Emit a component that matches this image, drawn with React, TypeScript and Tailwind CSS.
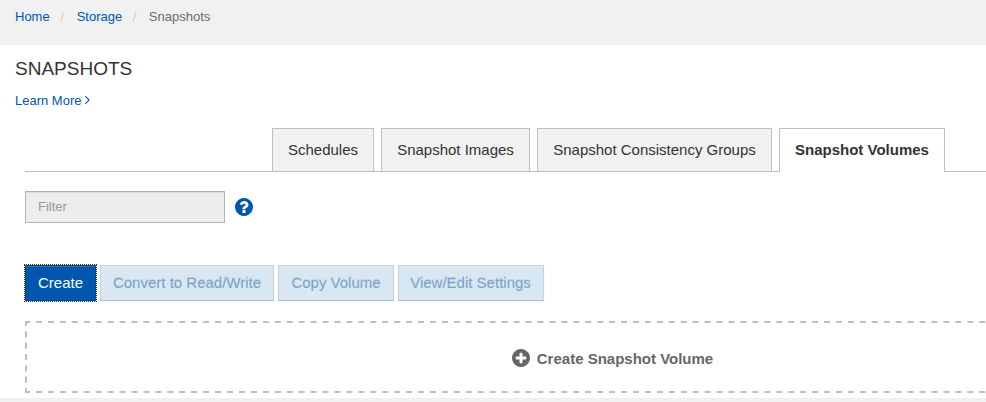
const tabs = [
  { label: 'Schedules', width: 'w-[102px]' },
  { label: 'Snapshot Images', width: 'w-[149px]' },
  { label: 'Snapshot Consistency Groups', width: 'w-[235px]' },
  { label: 'Snapshot Volumes', width: 'w-[166px]', active: true },
];

const disabledActions = [
  { label: 'Convert to Read/Write', width: 'w-[174px]' },
  { label: 'Copy Volume', width: 'w-[116px]' },
  { label: 'View/Edit Settings', width: 'w-[146px] pr-[1px]' },
];

const DISC =
  'm320-64q0 209-103 385.5t-279.5 279.5-385.5 103-385.5-103-279.5-279.5-103-385.5 103-385.5 279.5-279.5 385.5-103 385.5 103 279.5 279.5 103 385.5z';

function PlusCircle({ className }: { className: string }) {
  return (
    <svg className={className} viewBox="128 128 1536 1536" fill="currentColor">
      <path
        d={
          'M1344 960v-128q0-26-19-45t-45-19h-256v-256q0-26-19-45t-45-19h-128q-26 0-45 19t-19 45v256h-256q-26 0-45 19t-19 45v128q0 26 19 45t45 19h256v256q0 26 19 45t45 19h128q26 0 45-19t19-45v-256h256q26 0 45-19t19-45z' +
          DISC
        }
      />
    </svg>
  );
}

function QuestionCircle({ className }: { className: string }) {
  return (
    <svg className={className} viewBox="128 128 1536 1536" fill="currentColor">
      <path d="M1024 1376v-192q0-14-9-23t-23-9h-192q-14 0-23 9t-9 23v192q0 14 9 23t23 9h192q14 0 23-9t9-23zm256-672q0-88-55.5-163t-138.5-116-170-41q-243 0-371 213-15 24 8 42l132 100q7 6 19 6 16 0 25-12 53-68 86-92 34-24 86-24 48 0 85.5 26t37.5 59q0 38-20 61t-68 45q-63 28-115.5 86.5t-52.5 125.5v36q0 14 9 23t23 9h192q14 0 23-9t9-23q0-19 21.5-49.5t54.5-49.5q32-18 49-28.5t46-35 44.5-48 28-60.5 12.5-81zm384 192q0 209-103 385.5t-279.5 279.5-385.5 103-385.5-103-279.5-279.5-103-385.5 103-385.5 279.5-279.5 385.5-103 385.5 103 279.5 279.5 103 385.5z" />
    </svg>
  );
}

function AngleRight({ className }: { className: string }) {
  return (
    <svg className={className} viewBox="589 461 582 998" fill="currentColor">
      <path d="M1171 960q0 13-10 23l-466 466q-10 10-23 10t-23-10l-50-50q-10-10-10-23t10-23l393-393-393-393q-10-10-10-23t10-23l50-50q10-10 23-10t23 10l466 466q10 10 10 23z" />
    </svg>
  );
}

function Breadcrumb() {
  return (
    <nav className="flex h-[45px] items-start bg-[#f1f1f1] pl-[15px] pt-[7px] text-[13px] leading-[20px]">
      <a className="text-[#0056ad]">Home</a>
      <span className="w-[27px] pr-[2px] text-center text-[#cccccc]">/</span>
      <a className="text-[#0056ad]">Storage</a>
      <span className="w-[26.6px] pr-[2px] text-center text-[#cccccc]">/</span>
      <span className="text-[#6b6b6b]">Snapshots</span>
    </nav>
  );
}

/* Dashed outline of the empty-state panel */
function DashedOutline() {
  return (
    <svg className="absolute inset-0" width="1175" height="72" fill="none" stroke="#bfbfbf" strokeWidth="2">
      <path d="M0 1H5M0 71H5M1 0V5M1 67V72" />
      <path d="M11 1H1175M11 71H1175" strokeDasharray="5.97 5.97" />
      <path d="M1 10.3V66" strokeDasharray="6.2 5.1" />
    </svg>
  );
}

export default function App() {
  return (
    <div className="h-[402px] overflow-hidden bg-[#f1f1f1] font-['Liberation_Sans',Arial,sans-serif] text-[15px] text-[#333333]">
      <Breadcrumb />
      <main className="h-[353px] bg-white">
        <h1 className="pl-[15px] pt-[11px] text-[19px] leading-[26px]">SNAPSHOTS</h1>
        <a className="mt-[9px] flex items-center pl-[15px] text-[13px] leading-[20px] text-[#0056ad]">
          Learn More
          <AngleRight className="mb-[2px] ml-[4px] h-[8px] w-[4.7px]" />
        </a>

        <div className="ml-[25px] mt-[17px] flex h-[44px] gap-[7px] border-b border-[#bfbfbf] pl-[247px]">
          {tabs.map((tab) => (
            <button
              key={tab.label}
              className={`shrink-0 whitespace-nowrap border border-b-0 border-[#bfbfbf] ${tab.width} ${
                tab.active ? 'h-[44px] bg-white pb-[1px] font-bold' : 'h-[43px] bg-[#f1f1f1]'
              }`}
            >
              {tab.label}
            </button>
          ))}
        </div>

        <div className="mt-[19px] flex items-center pl-[25px]">
          <input
            placeholder="Filter"
            className="h-[32px] w-[200px] border border-[#b3b3b3] bg-[#ededed] px-[12px] pb-[2px] text-[13px] shadow-[inset_0_1px_1px_rgba(0,0,0,0.075)] outline-none placeholder:text-[#999999]"
          />
          <QuestionCircle className="ml-[10px] size-[18px] text-[#0056ad]" />
        </div>

        <div className="mt-[42px] flex gap-[4px] pl-[25px]">
          <button className="h-[36px] w-[71px] border border-[#004a95] bg-[#0056ad] text-white shadow-[inset_0_1px_0_rgba(255,255,255,0.15)] outline-1 outline-dotted outline-[#333333]">
            Create
          </button>
          {disabledActions.map((action) => (
            <button
              key={action.label}
              disabled
              className={`h-[36px] shrink-0 whitespace-nowrap border border-[#c3d3df] border-b-[#adc0cd] bg-[#d8e7f1] text-[#7ba5cf] shadow-[inset_0_1px_0_rgba(255,255,255,0.2),0_1px_2px_rgba(0,0,0,0.05)] [text-shadow:0_-1px_0_rgba(0,0,0,0.12)] ${action.width}`}
            >
              {action.label}
            </button>
          ))}
        </div>

        <div className="relative ml-[25px] mt-[20px] flex h-[72px] w-[1175px] items-center justify-center font-bold text-[#666666]">
          <DashedOutline />
          <PlusCircle className="mr-[7px] mt-[2px] size-[18px]" />
          <span className="pt-[4px]">Create Snapshot Volume</span>
        </div>
      </main>
    </div>
  );
}
